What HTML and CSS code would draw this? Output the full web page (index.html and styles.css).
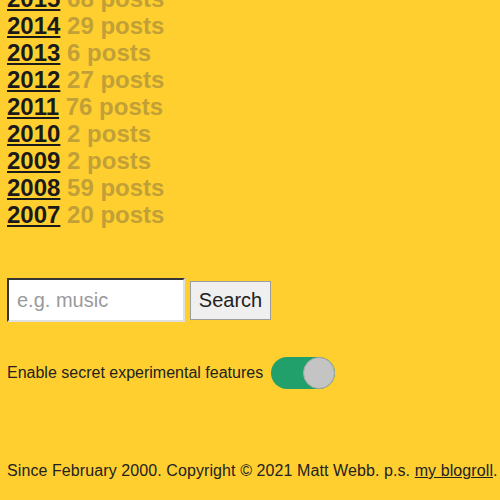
FILE: index.html
```html
<!DOCTYPE html>
<html lang="en">
<head>
<meta charset="UTF-8" />
<meta name="viewport" content="width=device-width, initial-scale=1" />
<title>Archive</title>
<link rel="stylesheet" href="styles.css">
</head>
<body>

<ul class="years">
  <li><a href="#">2015</a> <span class="count">68 posts</span></li>
  <li><a href="#">2014</a> <span class="count">29 posts</span></li>
  <li><a href="#">2013</a> <span class="count">6 posts</span></li>
  <li><a href="#">2012</a> <span class="count">27 posts</span></li>
  <li><a href="#">2011</a> <span class="count">76 posts</span></li>
  <li><a href="#">2010</a> <span class="count">2 posts</span></li>
  <li><a href="#">2009</a> <span class="count">2 posts</span></li>
  <li><a href="#">2008</a> <span class="count">59 posts</span></li>
  <li><a href="#">2007</a> <span class="count">20 posts</span></li>
</ul>

<form class="search" onsubmit="return false">
  <input type="text" placeholder="e.g. music" />
  <button type="submit">Search</button>
</form>

<div class="features">
  <span>Enable secret experimental features</span>
  <label class="switch">
    <input type="checkbox" checked />
    <span class="track"></span>
  </label>
</div>

<footer class="footer">
  Since February 2000. Copyright &copy; 2021 Matt Webb. p.s. <a href="#">my blogroll</a>.
</footer>

</body>
</html>
```

FILE: styles.css
```css
body {
  font-family: "Liberation Sans", Arial, sans-serif;
  margin: 0;
  padding: 0 7px;
  background-color: #ffcf2f;
  color: #222;
}

.years {
  list-style: none;
  margin: -15px 0 0 0;
  padding: 0;
  font-size: 24px;
  font-weight: bold;
  line-height: 27px;
}

.years a {
  color: #1a1a1a;
}

.count {
  color: #c2a038;
}

.search {
  display: flex;
  align-items: center;
  gap: 5px;
  margin-top: 50px;
}

.search input {
  width: 178px;
  height: 44px;
  box-sizing: border-box;
  border: 2px inset #e0e0e0;
  border-top-color: #8a8a8a;
  border-left-color: #8a8a8a;
  padding: 0 8px;
  font-family: inherit;
  font-size: 20px;
  background: white;
  margin: 0;
}

.search input::placeholder {
  color: #9a9a9a;
}

.search button {
  width: 81px;
  height: 39px;
  box-sizing: border-box;
  border: 1px solid #9c9c9c;
  background-color: #efefef;
  font-family: inherit;
  font-size: 20px;
  color: #222;
  padding: 0;
  margin: 0;
}

.features {
  display: flex;
  align-items: center;
  gap: 8px;
  margin-top: 35px;
  font-size: 16px;
}

.switch {
  position: relative;
  display: inline-block;
  width: 64px;
  height: 32px;
}

.switch input {
  opacity: 0;
  width: 0;
  height: 0;
}

.track {
  position: absolute;
  inset: 0;
  background-color: #ccc;
  border-radius: 16px;
}

.track::before {
  content: "";
  position: absolute;
  width: 30px;
  height: 30px;
  left: 0;
  top: 0;
  background-color: #c4c4c4;
  border: 1px solid #a8a8a8;
  border-radius: 50%;
}

.switch input:checked + .track {
  background-color: #22a06b;
}

.switch input:checked + .track::before {
  left: 32px;
}

.footer {
  margin-top: 73px;
  font-size: 16px;
  letter-spacing: 0.09px;
  white-space: nowrap;
}

.footer a {
  color: #222;
}
```
